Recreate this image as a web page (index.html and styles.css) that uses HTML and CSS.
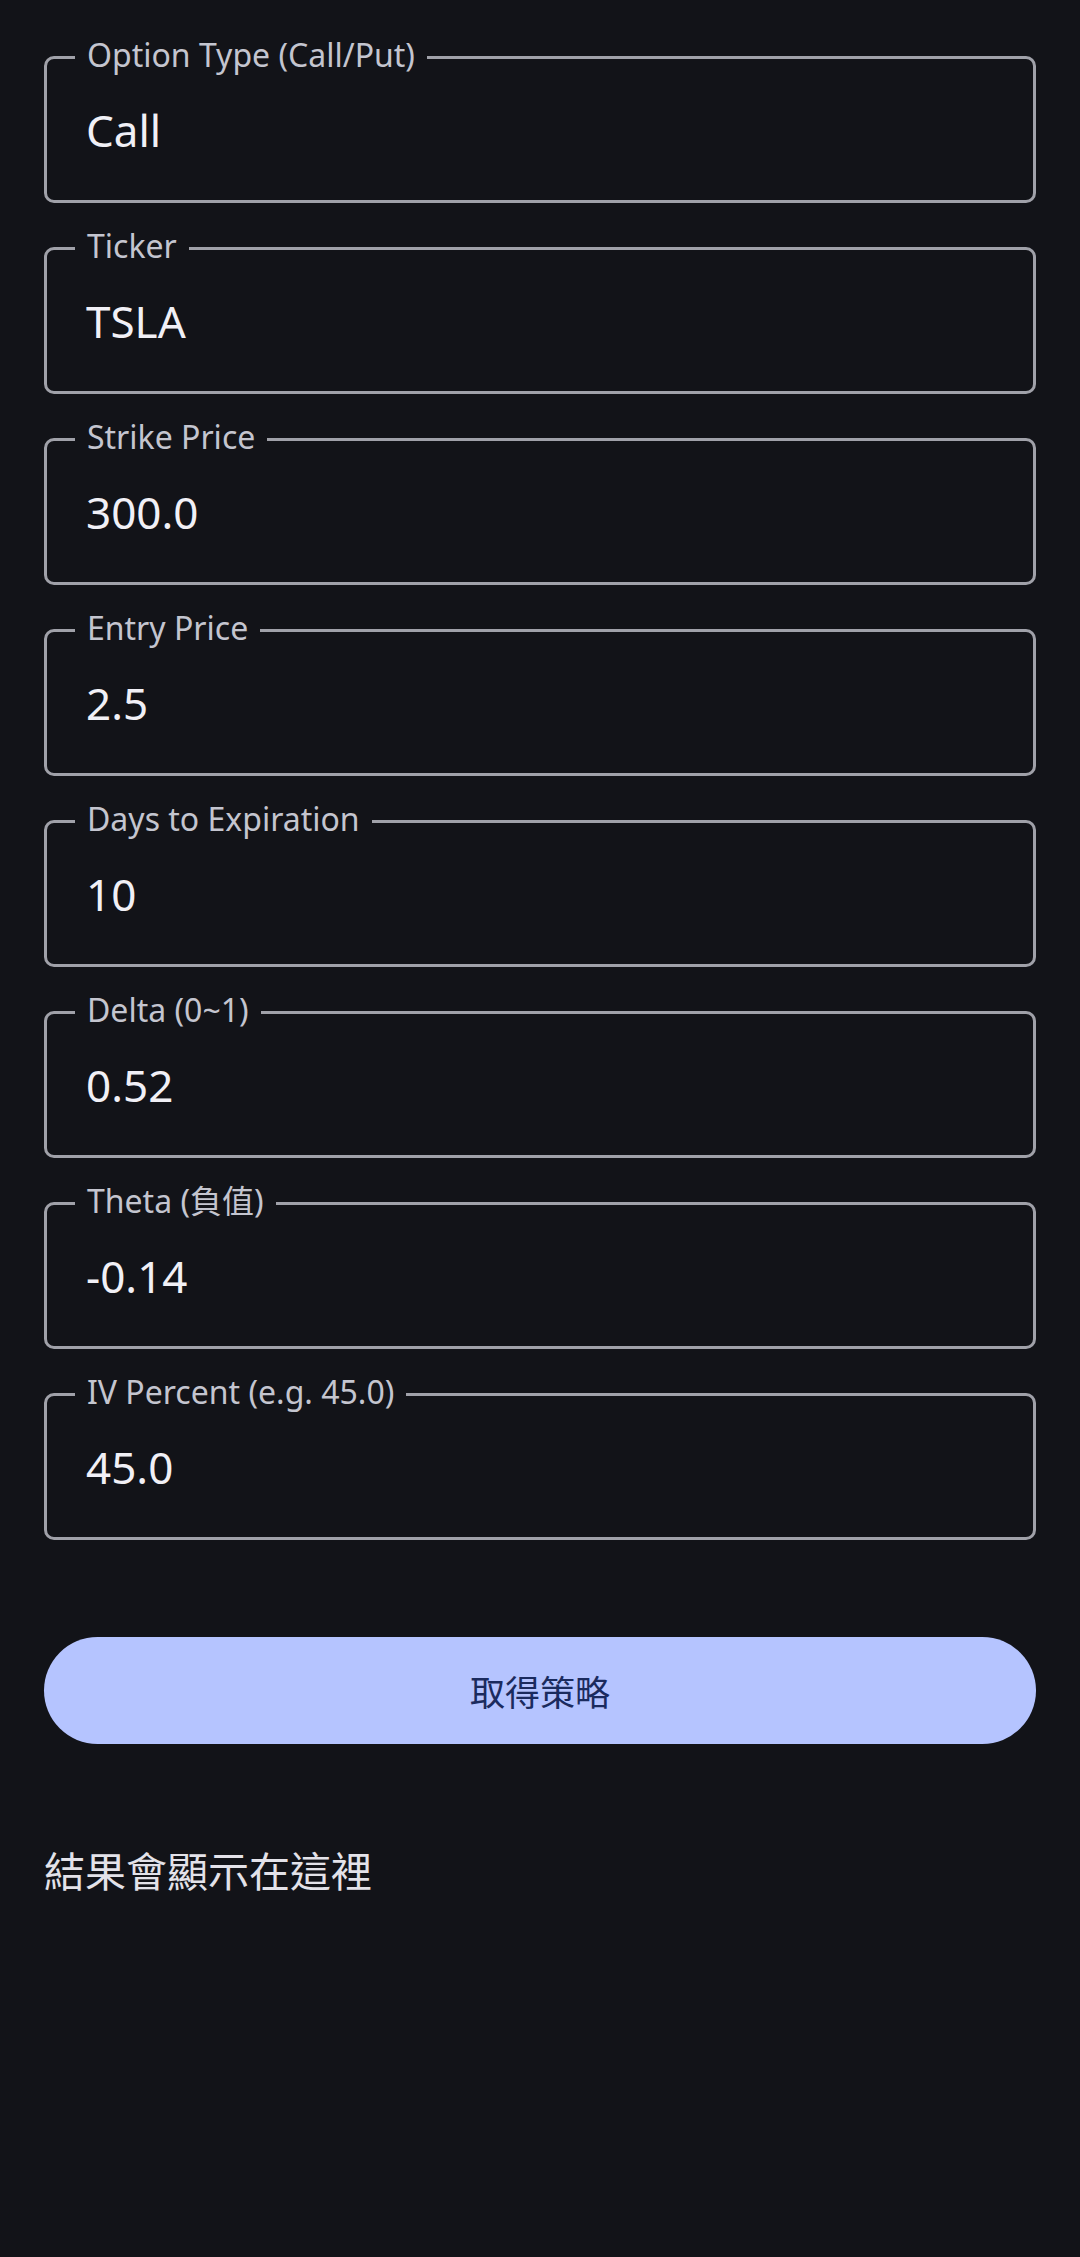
FILE: index.html
```html
<!DOCTYPE html>
<html lang="zh-Hant">
<head>
<meta charset="utf-8">
<title>Option Strategy</title>
<link rel="stylesheet" href="styles.css">
</head>
<body>
<main class="screen">
  <form class="form">
    <div class="field"><span class="field-label">Option Type (Call/Put)</span><span class="field-value">Call</span></div>
    <div class="field"><span class="field-label">Ticker</span><span class="field-value">TSLA</span></div>
    <div class="field"><span class="field-label">Strike Price</span><span class="field-value">300.0</span></div>
    <div class="field"><span class="field-label">Entry Price</span><span class="field-value">2.5</span></div>
    <div class="field"><span class="field-label">Days to Expiration</span><span class="field-value">10</span></div>
    <div class="field"><span class="field-label">Delta (0~1)</span><span class="field-value">0.52</span></div>
    <div class="field"><span class="field-label">Theta (負值)</span><span class="field-value">-0.14</span></div>
    <div class="field"><span class="field-label">IV Percent (e.g. 45.0)</span><span class="field-value">45.0</span></div>
    <button type="button" class="submit">取得策略</button>
  </form>
  <p class="result">結果會顯示在這裡</p>
</main>
</body>
</html>
```
FILE: styles.css
```css
html, body {
  margin: 0;
  padding: 0;
  background: #121318;
}
body {
  font-family: "Noto Sans", "Noto Sans CJK TC", sans-serif;
  color: #e3e2e9;
  min-height: 2257px;
}
.screen {
  padding: 56px 44px 0;
}
.form {
  display: flex;
  flex-direction: column;
  gap: 44px;
  margin: 0;
}
.field {
  position: relative;
  box-sizing: border-box;
  height: 147px;
  border: 3px solid #a0a1a9;
  border-radius: 10px;
  display: flex;
  align-items: center;
  padding-left: 39px;
}
.field-label {
  position: absolute;
  left: 28px;
  top: -20px;
  padding: 0 12px;
  background: #121318;
  font-size: 32px;
  line-height: 32px;
  color: #c4c5cf;
  white-space: nowrap;
}
.field-value {
  font-size: 44px;
  line-height: 1;
  color: #f1f0f6;
}
.submit {
  margin-top: 53px;
  height: 107px;
  border: none;
  border-radius: 54px;
  background: #b5c4ff;
  color: #1b2b5e;
  font-family: "Noto Sans CJK TC", "Noto Sans", sans-serif;
  font-size: 35px;
  padding: 0;
  width: 100%;
}
.result {
  margin: 97px 0 0;
  font-family: "Noto Sans CJK TC", sans-serif;
  font-size: 41px;
  line-height: 57px;
  color: #e3e2e9;
}
```
